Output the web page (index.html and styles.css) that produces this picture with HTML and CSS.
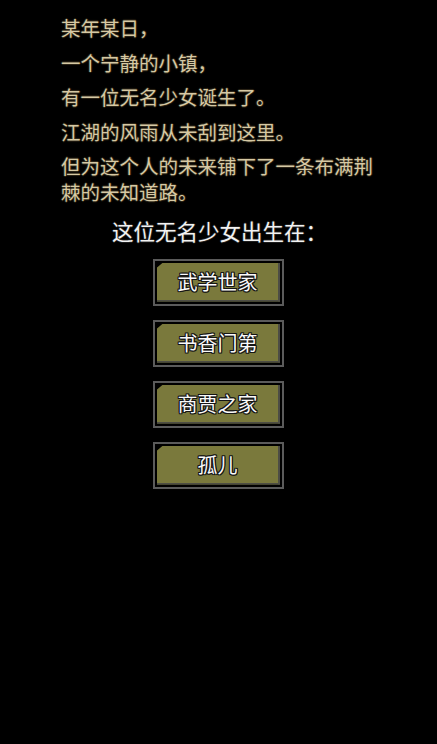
FILE: index.html
```html
<!DOCTYPE html>
<html lang="zh-CN">
<head>
<meta charset="utf-8">
<title>出身</title>
<link rel="stylesheet" href="styles.css">
</head>
<body>
<main class="scene">
  <section class="story">
    <p>某年某日，</p>
    <p>一个宁静的小镇，</p>
    <p>有一位无名少女诞生了。</p>
    <p>江湖的风雨从未刮到这里。</p>
    <p>但为这个人的未来铺下了一条布满荆棘的未知道路。</p>
  </section>
  <h2 class="prompt">这位无名少女出生在：</h2>
  <nav class="choices">
    <button class="choice"><span class="choice-face">武学世家</span></button>
    <button class="choice"><span class="choice-face">书香门第</span></button>
    <button class="choice"><span class="choice-face">商贾之家</span></button>
    <button class="choice"><span class="choice-face">孤儿</span></button>
  </nav>
</main>
</body>
</html>
```

FILE: styles.css
```css
html, body {
  margin: 0;
  padding: 0;
  background: #000;
}

body {
  font-family: "Noto Sans CJK SC", "Noto Sans", sans-serif;
  width: 437px;
  min-height: 744px;
}

.scene {
  display: flex;
  flex-direction: column;
  align-items: center;
  padding-top: 15px;
}

.story {
  align-self: flex-start;
  margin-left: 61px;
  width: 318px;
}

.story p {
  margin: 0 0 8.5px 0;
  font-size: 19.5px;
  line-height: 26px;
  color: #d6c9a4;
  text-shadow:
    1px 0 0 #2a2316, -1px 0 0 #2a2316,
    0 1px 0 #2a2316, 0 -1px 0 #2a2316,
    0 0 3px #1c170e;
}

.prompt {
  margin: 4px 0 15px 0;
  padding-left: 2px;
  font-size: 21.5px;
  font-weight: normal;
  line-height: 26px;
  color: #f2f2f2;
  text-shadow:
    1px 0 0 #1e1e1e, -1px 0 0 #1e1e1e,
    0 1px 0 #1e1e1e, 0 -1px 0 #1e1e1e;
}

.choices {
  display: flex;
  flex-direction: column;
  align-items: center;
  gap: 14px;
}

.choice {
  display: flex;
  box-sizing: border-box;
  width: 131px;
  height: 47px;
  margin: 0;
  padding: 2px;
  border: 2px solid #5b5b5b;
  background: #000;
  cursor: pointer;
}

.choice-face {
  flex: 1;
  display: flex;
  align-items: center;
  justify-content: center;
  box-sizing: border-box;
  padding-top: 1px;
  background: #7a793c;
  border-right: 2px solid #4d4d45;
  border-bottom: 2px solid #4d4d45;
  clip-path: polygon(6px 0, 100% 0, 100% 100%, 0 100%, 0 5px);
  font-family: "Noto Sans CJK SC", "Noto Sans", sans-serif;
  font-size: 20px;
  line-height: 1;
  color: #fafafa;
  text-shadow:
    1px 0 0 #151515, -1px 0 0 #151515,
    0 1px 0 #151515, 0 -1px 0 #151515,
    1px 1px 0 #151515, -1px -1px 0 #151515,
    1px -1px 0 #151515, -1px 1px 0 #151515;
}
```
